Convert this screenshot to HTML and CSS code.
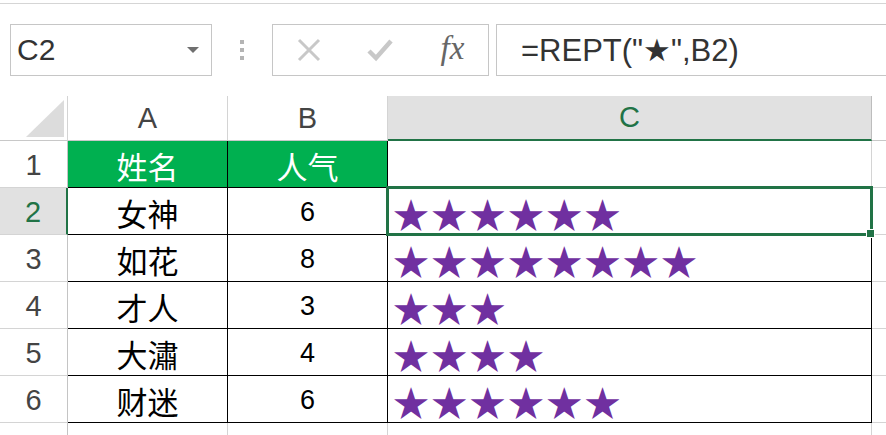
FILE: index.html
```html
<!DOCTYPE html>
<html lang="zh-CN">
  <head>
    <meta charset="UTF-8" />
    <meta name="viewport" content="width=device-width, initial-scale=1.0" />
    <title>REPT 星级</title>
    <link rel="stylesheet" href="styles.css">
  </head>
  <body>
    <div class="top-edge"></div>

    <div class="formula-bar">
      <div class="name-box">
        <span>C2</span>
        <span class="caret"></span>
      </div>
      <div class="grip"><i></i><i></i><i></i></div>
      <div class="fx-buttons">
        <span class="fx-btn">
          <svg width="24" height="24" viewBox="0 0 24 24">
            <path d="M2 2 L22 22 M22 2 L2 22" stroke="#c8c8c8" stroke-width="3" fill="none" />
          </svg>
        </span>
        <span class="fx-btn">
          <svg width="26" height="24" viewBox="0 0 26 24">
            <path d="M2 13 L9 20 L24 3" stroke="#c8c8c8" stroke-width="4.5" fill="none" />
          </svg>
        </span>
        <span class="fx-btn fx">fx</span>
      </div>
      <div class="formula-input">=REPT("★",B2)</div>
    </div>

    <div class="sheet">
      <!-- 列标题 -->
      <div class="corner">
        <svg width="67" height="44" viewBox="0 0 67 44">
          <polygon points="26,41 64,41 64,4" fill="#dcdcdc" />
        </svg>
      </div>
      <div class="col-head">A</div>
      <div class="col-head">B</div>
      <div class="col-head active">C</div>
      <div class="col-head pad"></div>

      <div class="row-head">1</div>
      <div class="cell bd title">姓名</div>
      <div class="cell bd title">人气</div>
      <div class="cell bd-b"></div>
      <div class="pad"></div>

      <div class="row-head active">2</div>
      <div class="cell bd">女神</div>
      <div class="cell bd num">6</div>
      <div class="cell bd stars sel">★★★★★★<span class="handle"></span></div>
      <div class="pad"></div>

      <div class="row-head">3</div>
      <div class="cell bd">如花</div>
      <div class="cell bd num">8</div>
      <div class="cell bd stars">★★★★★★★★</div>
      <div class="pad"></div>

      <div class="row-head">4</div>
      <div class="cell bd">才人</div>
      <div class="cell bd num">3</div>
      <div class="cell bd stars">★★★</div>
      <div class="pad"></div>

      <div class="row-head">5</div>
      <div class="cell bd">大潚</div>
      <div class="cell bd num">4</div>
      <div class="cell bd stars">★★★★</div>
      <div class="pad"></div>

      <div class="row-head">6</div>
      <div class="cell bd">财迷</div>
      <div class="cell bd num">6</div>
      <div class="cell bd stars">★★★★★★</div>
      <div class="pad"></div>

      <div class="row-head">7</div>
      <div class="cell"></div>
      <div class="cell"></div>
      <div class="cell"></div>
      <div class="pad"></div>
    </div>
  </body>
</html>
```

FILE: styles.css
```css
body {
  margin: 0;
  width: 886px;
  height: 435px;
  overflow: hidden;
  background: #fff;
  font-family: "Liberation Sans", Arial, "DejaVu Sans", "Noto Sans CJK SC", sans-serif;
  color: #333;
}

.top-edge {
  height: 3px;
  border-bottom: 1px solid #d5d5d5;
}

/* 编辑栏 */
.formula-bar {
  display: flex;
  height: 52px;
  padding: 20px 0 20px 10px;
}

.name-box {
  box-sizing: border-box;
  width: 202px;
  border: 1px solid #c6c6c6;
  display: flex;
  align-items: center;
  justify-content: space-between;
  padding: 0 12px 0 6px;
  font-size: 30px;
}

.caret {
  width: 0;
  height: 0;
  border-left: 6px solid transparent;
  border-right: 6px solid transparent;
  border-top: 6px solid #6f6f6f;
}

.grip {
  width: 60px;
  display: flex;
  flex-direction: column;
  align-items: center;
  justify-content: center;
  gap: 4px;
}

.grip i {
  width: 4px;
  height: 4px;
  background: #b4b4b4;
}

.fx-buttons {
  box-sizing: border-box;
  width: 217px;
  border: 1px solid #c6c6c6;
  display: flex;
  margin-right: 7px;
}

.fx-btn {
  flex: 1;
  display: flex;
  align-items: center;
  justify-content: center;
}

.fx {
  font-family: "Liberation Serif", "Times New Roman", serif;
  font-style: italic;
  font-size: 33px;
  color: #666;
  padding-bottom: 4px;
  padding-left: 2px;
}

.formula-input {
  flex: 1;
  border: 1px solid #c6c6c6;
  border-right: none;
  display: flex;
  align-items: center;
  padding-left: 24px;
  font-size: 31px;
}

/* 表格 */
.sheet {
  display: grid;
  grid-template-columns: 68px 160px 160px 484px 1fr;
  grid-template-rows: 45px repeat(7, 47px);
}

.sheet > div {
  box-sizing: border-box;
  border-right: 1px solid #d4d4d4;
  border-bottom: 1px solid #d4d4d4;
  display: flex;
  align-items: center;
  justify-content: center;
  line-height: 1;
}

.corner {
  border-bottom-color: #c8c8c8 !important;
}

.col-head {
  font-size: 29px;
  color: #444;
  border-bottom-color: #c8c8c8 !important;
}

.col-head.active {
  background: #e1e1e1;
  color: #217346;
  border-right-color: #bdbdbd;
  border-bottom: 2px solid #217346 !important;
}

.row-head {
  font-size: 29px;
  color: #444;
  padding-top: 2px;
  border-right-color: #c4c4c4 !important;
}

.row-head.active {
  background: #e1e1e1;
  color: #217346;
  border-right: 2px solid #217346 !important;
}

.sheet > .pad {
  border-right: none;
}

.cell {
  font-family: "Noto Sans CJK SC", sans-serif;
  font-size: 31px;
  color: #000;
  padding-top: 3px;
}

.cell.bd {
  border-right-color: #000;
  border-bottom-color: #000;
}

.cell.bd-b {
  border-bottom-color: #000;
}

.cell.title {
  background: #00b050;
  color: #fff;
}

.cell.num {
  font-family: "Liberation Sans", Arial, sans-serif;
  font-size: 27px;
}

.cell.stars {
  justify-content: flex-start;
  padding-left: 5px;
  font-size: 36px;
  letter-spacing: 2.3px;
  color: #7030a0;
  white-space: nowrap;
}

.sel {
  position: relative;
}

.sel::after {
  content: "";
  position: absolute;
  top: -2px;
  left: -2px;
  right: -2px;
  bottom: -2px;
  border: 3px solid #217346;
  pointer-events: none;
}

.handle {
  position: absolute;
  right: -4px;
  bottom: -4px;
  width: 7px;
  height: 7px;
  background: #217346;
  border: 1px solid #fff;
  z-index: 1;
}
```
